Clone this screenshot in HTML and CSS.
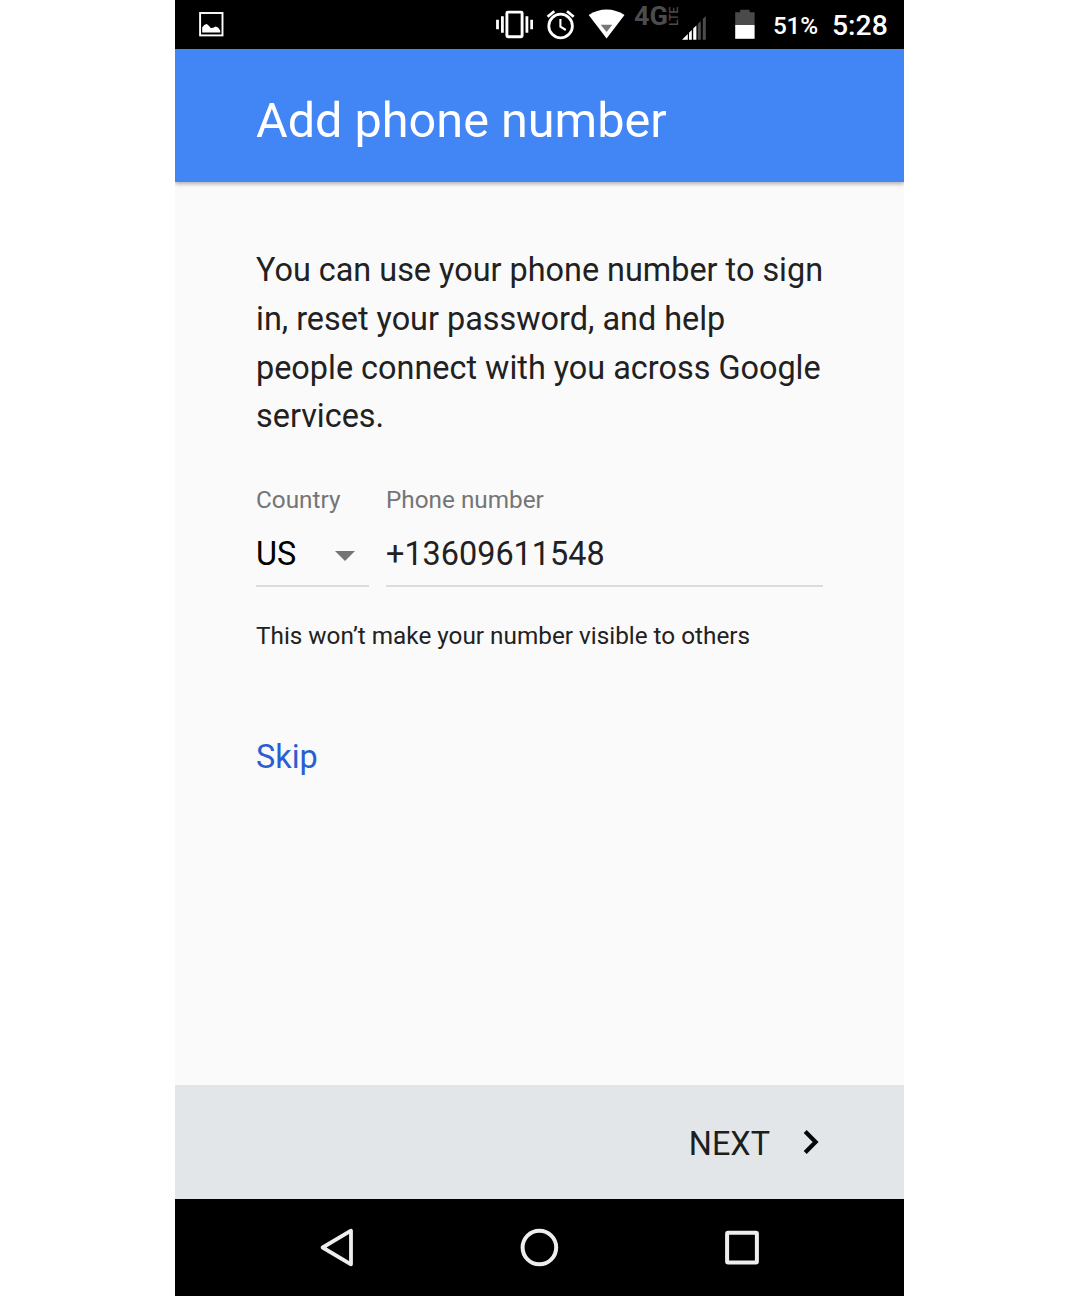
FILE: index.html
```html
<!DOCTYPE html>
<html lang="en">
<head>
<meta charset="utf-8">
<title>Add phone number</title>
<link rel="stylesheet" href="styles.css">
</head>
<body>
<div class="phone">
  <div class="status-bar">
    <svg class="picture-icon" width="25" height="48" viewBox="199 0 25 48">
      <rect x="200.1" y="13" width="22.4" height="22.4" fill="none" stroke="#fff" stroke-width="1.9"/>
      <path d="M202.2 32.5v-5.2l2.4-2.6 2.2-.8 2.3 2 1.6 2.1 2.5-.2 2.6-1.3 2.5 1.3 1.9 2.6v2.1z" fill="#fff"/>
    </svg>
    <div class="status-right">
      <svg width="37" height="48" viewBox="496 0 37 48">
        <rect x="506.9" y="12.1" width="15.2" height="24.7" rx="1" fill="none" stroke="#fff" stroke-width="2.9"/>
        <path d="M502.4 16.2v16.6M497.5 19.7v9.6M526.9 16.2v16.6M531.7 19.7v9.6" stroke="#fff" stroke-width="2.8"/>
      </svg>
      <svg class="alarm-icon" width="29" height="48" viewBox="546 0 29 48">
        <circle cx="560.6" cy="26" r="11.8" fill="none" stroke="#fff" stroke-width="2.8"/>
        <path d="M547.6 16.8l6.7-5.6M573.7 16.8l-6.7-5.6" stroke="#fff" stroke-width="2.8"/>
        <path d="M560.4 19v7.6l5.4 3.4" fill="none" stroke="#fff" stroke-width="2.1"/>
      </svg>
      <svg class="wifi-icon" width="37" height="48" viewBox="588 0 37 48">
        <path d="M588.7 15.1Q597 9.6 606.6 9.6t17.9 5.5L606.6 38.5z" fill="#fff"/>
        <path d="M600.7 24.8h11.6l-5.7 7.3z" fill="#777"/>
      </svg>
      <svg class="signal-icon" width="72" height="48" viewBox="635 0 72 48">
        <text class="network" x="634" y="25" textLength="34" lengthAdjust="spacingAndGlyphs">4G</text>
        <text class="lte" transform="translate(678.3 25.7) rotate(-90)" x="0" y="0" textLength="19" lengthAdjust="spacingAndGlyphs">LTE</text>
        <path d="M682 39.8l5.8-5.8v5.8zM689 39.8v-7l2.8-2.8v9.8zM693.2 39.8V28.6l3.2-3.2v14.4z" fill="#fff"/>
        <path d="M697.8 39.8V24l3-3v18.8zM702.8 39.8V19l3-3v23.8z" fill="#4c4c4c"/>
      </svg>
      <svg class="battery-icon" width="20" height="48" viewBox="735 0 20 48">
        <path d="M735.2 25V12.2h5V9.8h9.4v2.4h5V25z" fill="#4a4a4a"/>
        <path d="M735.2 25h19.4v13.8h-19.4z" fill="#fff"/>
      </svg>
      <span class="battery-level">51%</span>
      <span class="clock">5:28</span>
    </div>
  </div>
  <header class="title-bar"><h1>Add phone number</h1></header>
  <main class="content">
    <p class="intro">You can use your phone number to sign in, reset your password, and help people connect with you across Google services.</p>
    <div class="fields">
      <div class="field country">
        <span class="label">Country</span>
        <div class="value country-value">US
          <svg width="20" height="10" viewBox="0 0 20 10"><path d="M0 0h20L10 10z" fill="#757575"/></svg>
        </div>
      </div>
      <div class="field number">
        <span class="label">Phone number</span>
        <div class="value">+13609611548</div>
      </div>
    </div>
    <p class="hint">This won’t make your number visible to others</p>
    <a class="skip">Skip</a>
  </main>
  <footer class="actions">
    <span>NEXT</span>
    <svg width="17" height="26" viewBox="0 0 17 26"><path d="M2.2 2.6L12.6 13 2.2 23.4" fill="none" stroke="#060709" stroke-width="4.2"/></svg>
  </footer>
  <nav class="nav-bar">
    <svg width="36" height="42" viewBox="0 0 36 42"><path d="M3.6 20.5L32 3.7v33.6z" fill="none" stroke="#eee" stroke-width="3.8" stroke-linejoin="round"/></svg>
    <svg width="40" height="40" viewBox="0 0 40 40"><circle cx="19.4" cy="19.5" r="16.8" fill="none" stroke="#eee" stroke-width="4"/></svg>
    <svg width="36" height="36" viewBox="0 0 36 36"><rect x="3.1" y="2.7" width="29.8" height="29.8" rx="1" fill="none" stroke="#eee" stroke-width="4"/></svg>
  </nav>
</div>
</body>
</html>
```
FILE: styles.css
```css
* { box-sizing: border-box; }

body {
  margin: 0;
  background: #fff;
  font-family: Roboto, "Liberation Sans", sans-serif;
}

svg { display: block; flex: none; }

.phone {
  width: 729px;
  height: 1296px;
  margin-left: 175px;
  display: flex;
  flex-direction: column;
  overflow: hidden;
  background: #fafafa;
}

.status-bar {
  height: 48.6px;
  flex: none;
  padding: 0 16px 0 24px;
  display: flex;
  justify-content: space-between;
  background: #000;
  color: #fff;
}

.status-right { display: flex; width: 392px; }
.alarm-icon { margin-left: 13px; }
.wifi-icon { margin-left: 13px; }
.signal-icon { margin-left: 10px; overflow: visible; }
.battery-icon { margin-left: 28px; }
.network { font-size: 25px; font-weight: 700; fill: #4c4c4c; }
.lte { font-size: 12.5px; font-weight: 500; fill: #4c4c4c; }

.battery-level, .clock { font-weight: 500; line-height: 51px; white-space: nowrap; }
.battery-level { width: 44px; margin-left: 18px; font-size: 24.3px; letter-spacing: -0.2px; }
.clock { margin-left: 15px; font-size: 28.35px; }

.title-bar {
  height: 133.4px;
  flex: none;
  padding: 0 81px;
  display: flex;
  align-items: center;
  background: #4285f4;
  box-shadow: 0 2px 4px rgba(0, 0, 0, 0.3);
}

h1 {
  margin: 0;
  padding-top: 11px;
  color: #fff;
  font-size: 48.6px;
  line-height: 57px;
  font-weight: 400;
}

.content {
  flex: 1;
  padding: 64.5px 81px 0;
  color: #212121;
}

.intro { margin: 0 -6px 0 0; font-size: 32.4px; line-height: 48.6px; }

.fields { display: flex; gap: 17px; margin-top: 42.5px; }
.field { border-bottom: 2px solid #dcdcdc; height: 104px; }
.country { width: 113px; }
.number { width: 437px; }
.label { display: block; font-size: 24.3px; line-height: 34px; color: #757575; }
.value { font-size: 32.4px; line-height: 40px; margin-top: 17px; }
.country-value {
  display: flex;
  justify-content: space-between;
  align-items: center;
  padding-right: 14px;
  color: #000;
}
.country-value svg { margin-top: 4px; }

.hint { margin: 31px 0 0; font-size: 24.3px; line-height: 36px; }

.skip {
  display: block;
  margin-top: 79px;
  font-size: 32.4px;
  line-height: 48px;
  color: #2a5fd1;
}

.actions {
  height: 114px;
  flex: none;
  padding-right: 84px;
  display: flex;
  justify-content: flex-end;
  align-items: center;
  gap: 33px;
  background: #e3e6e8;
  color: #1c1e20;
  font-size: 32.4px;
}
.actions span { padding-top: 3px; }

.nav-bar {
  height: 97px;
  flex: none;
  padding: 0 144px;
  display: flex;
  justify-content: space-between;
  align-items: center;
  background: #000;
}
```
